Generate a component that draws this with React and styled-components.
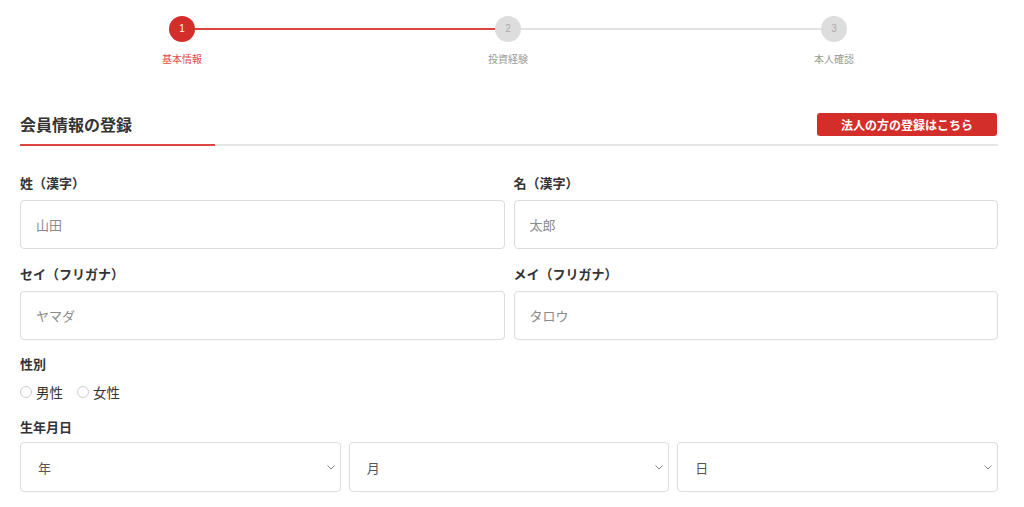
import React from 'react';
import styled, { createGlobalStyle } from 'styled-components';

const GlobalStyle = createGlobalStyle`
  body {
    margin: 0;
    background: #fff;
    font-family: "Noto Sans CJK JP", "Noto Sans", sans-serif;
    color: #333;
  }
`;

const Page = styled.div`
  width: 978px;
  padding: 16px 26px 0 20px;
`;

const Stepper = styled.div`
  display: flex;
  margin-left: 149px;
  width: 678px;
`;

const Step = styled.div`
  width: 26px;
  display: flex;
  flex-direction: column;
  align-items: center;
`;

const Circle = styled.div`
  width: 26px;
  height: 26px;
  border-radius: 50%;
  background: ${p => (p.active ? '#d42e2a' : '#dddddd')};
  color: ${p => (p.active ? '#fff' : '#aaa')};
  font-size: 10px;
  line-height: 26px;
  text-align: center;
  font-family: "Liberation Sans", sans-serif;
`;

const StepLabel = styled.div`
  margin-top: 10px;
  font-size: 10px;
  line-height: 14px;
  white-space: nowrap;
  color: ${p => (p.active ? '#e04a46' : '#999')};
`;

const Connector = styled.div`
  flex: 1;
  height: 2px;
  margin-top: 12px;
  background: ${p => (p.active ? '#df4340' : '#e2e2e2')};
`;

const Header = styled.div`
  display: flex;
  justify-content: space-between;
  align-items: center;
  margin-top: 46px;
  height: 24px;
`;

const Title = styled.h1`
  margin: 0;
  font-size: 16px;
  font-weight: 700;
  color: #333;
`;

const CorpButton = styled.button`
  width: 180px;
  height: 23px;
  border: none;
  border-radius: 3px;
  background: #d42e2a;
  color: #fff;
  font-family: inherit;
  font-size: 12px;
  font-weight: 700;
  margin-right: 1px;
  padding: 0;
`;

const Rule = styled.div`
  margin-top: 8px;
  height: 2px;
  background: #e5e5e5;
`;

const RuleAccent = styled.div`
  width: 195px;
  height: 2px;
  background: #df4340;
`;

const Grid = styled.div`
  display: grid;
  grid-template-columns: repeat(${p => p.cols}, 1fr);
  column-gap: ${p => p.gap}px;
  row-gap: 16px;
  margin-top: ${p => p.top}px;
`;

const Field = styled.div`
  display: flex;
  flex-direction: column;
`;

const Label = styled.label`
  display: block;
  font-size: 13px;
  line-height: 18px;
  font-weight: 700;
  color: #333;
  margin-top: ${p => p.top || 0}px;
  margin-bottom: ${p => p.bottom || 8}px;
`;

const Input = styled.input`
  box-sizing: border-box;
  height: 49px;
  width: 100%;
  border: 1px solid #dcdcdc;
  border-radius: 4px;
  padding: 0 15px;
  font-family: inherit;
  font-size: 13px;
  color: #333;
  outline: none;
  &::placeholder {
    color: #8a8a8a;
  }
`;

const Radios = styled.div`
  display: flex;
  gap: 14px;
  height: 18px;
  align-items: center;
`;

const RadioItem = styled.span`
  display: flex;
  align-items: center;
  gap: 4px;
  font-size: 13.5px;
  color: #333;
`;

const RadioDot = styled.span`
  box-sizing: border-box;
  width: 12px;
  height: 12px;
  border-radius: 50%;
  border: 1px solid #cfcfcf;
  background: #fff;
`;

const SelectBox = styled.div`
  box-sizing: border-box;
  height: 50px;
  border: 1px solid #dcdcdc;
  border-radius: 4px;
  padding: 0 5px 0 17px;
  display: flex;
  align-items: center;
  justify-content: space-between;
  font-size: 13px;
  color: #555;
`;

const Chevron = () => (
  <svg width="8" height="5" viewBox="0 0 8 5">
    <path d="M0.5 0.5 L4 4 L7.5 0.5" fill="none" stroke="#888" strokeWidth="1" />
  </svg>
);

const steps = ['基本情報', '投資経験', '本人確認'];

export default function App() {
  return (
    <>
      <GlobalStyle />
      <Page>
        <Stepper>
          {steps.map((s, i) => (
            <React.Fragment key={s}>
              {i > 0 && <Connector active={i === 1} />}
              <Step>
                <Circle active={i === 0}>{i + 1}</Circle>
                <StepLabel active={i === 0}>{s}</StepLabel>
              </Step>
            </React.Fragment>
          ))}
        </Stepper>

        <Header>
          <Title>会員情報の登録</Title>
          <CorpButton>法人の方の登録はこちら</CorpButton>
        </Header>
        <Rule>
          <RuleAccent />
        </Rule>

        <Grid cols={2} gap={9} top={28}>
          <Field>
            <Label>姓（漢字）</Label>
            <Input placeholder="山田" />
          </Field>
          <Field>
            <Label>名（漢字）</Label>
            <Input placeholder="太郎" />
          </Field>
          <Field>
            <Label>セイ（フリガナ）</Label>
            <Input placeholder="ヤマダ" />
          </Field>
          <Field>
            <Label>メイ（フリガナ）</Label>
            <Input placeholder="タロウ" />
          </Field>
        </Grid>

        <Label top={15} bottom={10}>性別</Label>
        <Radios>
          <RadioItem><RadioDot />男性</RadioItem>
          <RadioItem><RadioDot />女性</RadioItem>
        </Radios>

        <Label top={17} bottom={6}>生年月日</Label>
        <Grid cols={3} gap={8} top={0}>
          {['年', '月', '日'].map(t => (
            <SelectBox key={t}>
              {t}
              <Chevron />
            </SelectBox>
          ))}
        </Grid>
      </Page>
    </>
  );
}
